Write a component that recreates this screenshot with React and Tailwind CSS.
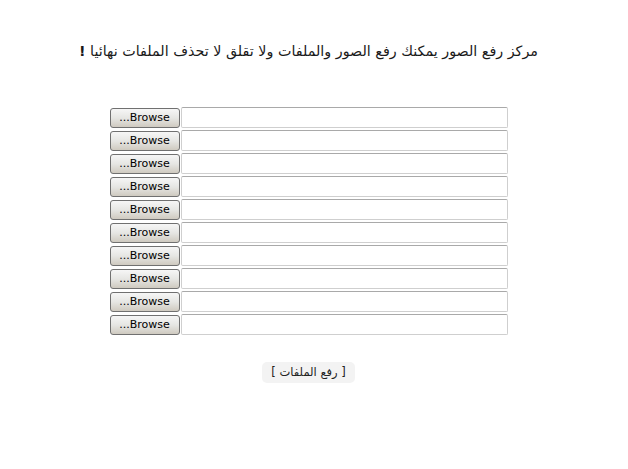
import React from 'react';

const rows = Array.from({ length: 10 });

export default function App() {
  return (
    <div
      className="w-[628px] h-[469px] bg-white text-[#1a1a1a] pr-[11px]"
      style={{ fontFamily: '"DejaVu Sans", Tahoma, sans-serif' }}
    >
      <div className="pt-[39px] text-center text-[14.3px] leading-[24px]" dir="rtl">
        مركز رفع الصور يمكنك رفع الصور والملفات ولا تقلق لا تحذف الملفات نهائيا <span className="font-bold">!</span>
      </div>

      {/* upload rows */}
      <div className="mt-[44px] flex flex-col items-center gap-[2px]">
        {rows.map((_, i) => (
          <div key={i} className="flex items-center h-[21px]">
            <button className="w-[70px] h-[20px] rounded-[3px] border border-[#707070] bg-gradient-to-b from-[#f6f6f6] via-[#e6e6e3] to-[#cfcac0] text-[11px] leading-none text-black">
              ...Browse
            </button>
            <div className="ml-[1px] w-[327px] h-[21px] border border-[#cfcfcf] border-t-[#a9a9a9] rounded-[2px] bg-white" />
          </div>
        ))}
      </div>

      <div className="mt-[27px] flex justify-center">
        <button
          dir="rtl"
          className="w-[93px] h-[21px] rounded-[5px] bg-[#f3f3f3] text-[11.5px] leading-none text-[#222]"
        >
          [ رفع الملفات ]
        </button>
      </div>
    </div>
  );
}
